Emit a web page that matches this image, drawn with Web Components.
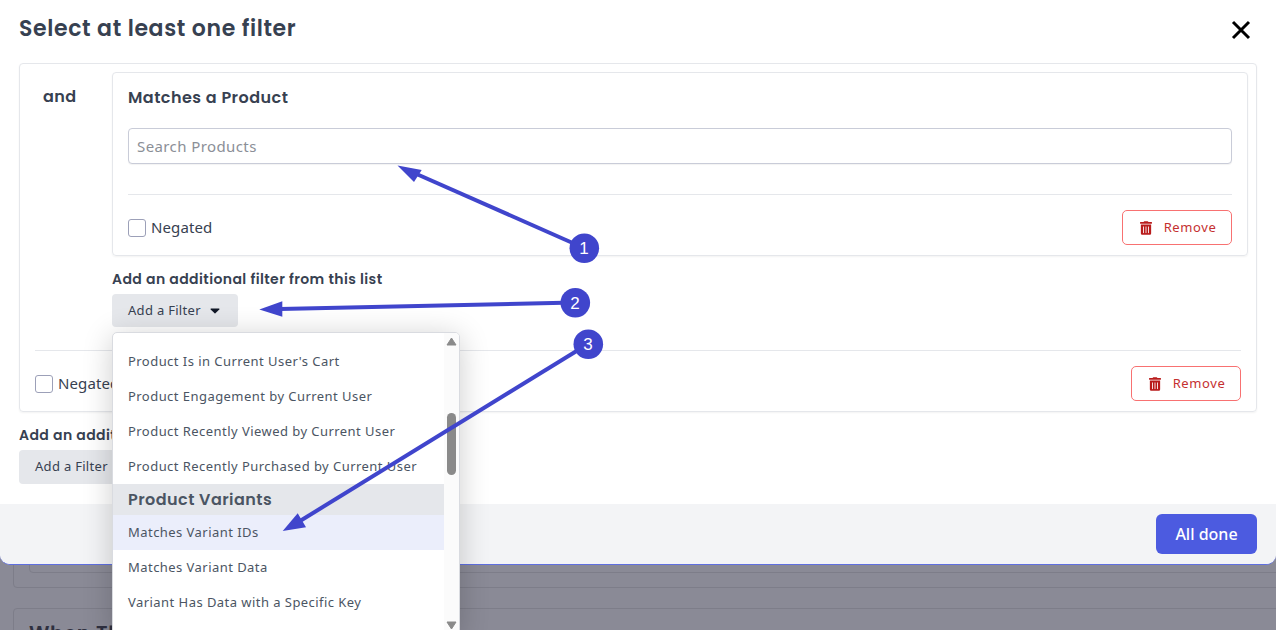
<!DOCTYPE html>
<html lang="en"><head><meta charset="utf-8"><title>Select at least one filter</title>
<style>
html,body{margin:0;height:630px;overflow:hidden;background:#8a8a96;font-family:"Noto Sans","Open Sans",sans-serif;color:#374151}
</style></head><body>
<app-page>
  <backdrop-page slot="backdrop"></backdrop-page>
  <filter-modal heading="Select at least one filter">
    <filter-group>
      <filter-card heading="Matches a Product">
        <search-field placeholder="Search Products"></search-field>
      </filter-card>
      <add-filter label="Add an additional filter from this list" open></add-filter>
    </filter-group>
    <add-filter label="Add an additional filter from this list" slot="after" tall></add-filter>
  </filter-modal>
  <annotation-layer></annotation-layer>
</app-page>
<script>
const HEAD='"Poppins","Inter","Noto Sans",sans-serif';
const TRASH='<svg viewBox="0 0 448 512" width="12" height="14" fill="#b91c1c" aria-hidden="true"><path d="M32 464a48 48 0 0 0 48 48h288a48 48 0 0 0 48-48V128H32zm272-256a16 16 0 0 1 32 0v224a16 16 0 0 1-32 0zm-96 0a16 16 0 0 1 32 0v224a16 16 0 0 1-32 0zm-96 0a16 16 0 0 1 32 0v224a16 16 0 0 1-32 0zM432 32H312l-9.4-18.7A24 24 0 0 0 281.1 0H166.8a23.72 23.72 0 0 0-21.4 13.3L136 32H16A16 16 0 0 0 0 48v32a16 16 0 0 0 16 16h416a16 16 0 0 0 16-16V48a16 16 0 0 0-16-16z"/></svg>';
function def(name,html,init){
  customElements.define(name,class extends HTMLElement{
    constructor(){super();this.attachShadow({mode:'open'});}
    connectedCallback(){
      this.shadowRoot.innerHTML=typeof html==='function'?html(this):html;
      if(init)init(this);
    }
  });
}
def('app-page',`<style>:host{display:block;position:relative;width:1276px;height:630px;overflow:hidden}</style>
<slot name="backdrop"></slot><slot></slot>`);

def('backdrop-page',`<style>
:host{display:block;position:absolute;inset:0}
.a{position:absolute;left:13px;right:-20px;top:500px;height:86px;border:1px solid #7d7d89;border-radius:4px}
.b{position:absolute;left:29px;right:-20px;top:500px;height:71px;border:1px solid #7d7d89;border-radius:4px}
.c{position:absolute;left:13px;right:-20px;top:608px;height:60px;border:1px solid #7d7d89;border-radius:4px 4px 0 0;padding:10px 15px;font:600 20px/28px ${HEAD};color:#2f3040;letter-spacing:.6px}
</style><div class="a"></div><div class="b"></div><div class="c">When This</div>`);

def('filter-modal',h=>`<style>
:host{display:flex;flex-direction:column;position:absolute;left:0;top:0;width:1276px;height:565px;box-sizing:border-box;background:#fff;border-radius:0 0 10px 10px;border-bottom:1px solid #5f6fe0}
header{display:flex;justify-content:space-between;align-items:center;height:63px;flex:none;box-sizing:border-box;padding:0 24px 5px 19px}
h2{margin:0;font:600 22px/30px ${HEAD};color:#374151;letter-spacing:.63px}
button{all:unset;display:block;width:22px;height:22px;margin-top:2px}
main{flex:1;padding:0 19px;min-height:0}
footer{flex:none;height:60px;box-sizing:border-box;background:#f3f4f6;border-radius:0 0 10px 10px;display:flex;justify-content:flex-end;align-items:center;padding:0 19px}
.done{all:unset;width:101px;height:40px;background:#4c5be0;color:#fff;border-radius:6px;font:500 16px/38px "Noto Sans",sans-serif;text-align:center}
.after{display:block;margin-top:13px}
</style>
<header><h2>${h.getAttribute('heading')}</h2>
<button aria-label="Close"><svg viewBox="0 0 22 22" width="22" height="22"><path d="M3 3 19 19M19 3 3 19" stroke="#000" stroke-width="3" fill="none"/></svg></button></header>
<main><slot></slot><div class="after"><slot name="after"></slot></div></main>
<footer><button class="done">All done</button></footer>`);

def('filter-group',`<style>
:host{display:block;box-sizing:border-box;height:349px;border:1px solid #e5e7eb;border-radius:4px;box-shadow:0 1px 2px rgba(0,0,0,.05)}
.top{display:flex;height:277px;box-sizing:border-box;padding:8px 8px 0 0}
.and{flex:none;width:92px;box-sizing:border-box;padding:15px 0 0 23px;font:600 16px/20px ${HEAD};color:#374151;letter-spacing:.4px}
.col{flex:1;min-width:0}
.col ::slotted(add-filter){margin-top:13px}
hr{border:0;border-top:1px solid #e5e7eb;margin:9px 15px 0}
</style>
<div class="top"><div class="and">and</div><div class="col"><slot></slot></div></div>
<hr>
<row-actions style="padding:15px 15px 0"></row-actions>`);

def('filter-card',h=>`<style>
:host{display:block;box-sizing:border-box;height:184px;border:1px solid #e5e7eb;border-radius:4px;box-shadow:0 1px 2px rgba(0,0,0,.05);padding:14px 15px 0}
h3{margin:0 0 19px;font:600 16px/22px ${HEAD};color:#374151;letter-spacing:.47px}
hr{border:0;border-top:1px solid #e5e7eb;margin:30px 0 15px}
</style><h3>${h.getAttribute('heading')}</h3><slot></slot><hr><row-actions></row-actions>`);

def('search-field',h=>`<style>
:host{display:block}
input{display:block;box-sizing:border-box;width:100%;height:36px;border:1px solid #c9ccd8;border-radius:4px;padding:0 8px;font:15px "Noto Sans",sans-serif;color:#374151;letter-spacing:.4px;outline:0;box-shadow:0 1px 1px rgba(0,0,0,.05)}
input::placeholder{color:#8b8f97;opacity:1}
</style><input placeholder="${h.getAttribute('placeholder')}">`);

def('row-actions',`<style>
:host{display:flex;justify-content:space-between;align-items:center;height:35px}
label{display:flex;align-items:center;gap:5px;font:15px/20px "Noto Sans",sans-serif;color:#374151;letter-spacing:.1px}
label span,button span{margin-top:-2px}
i{display:block;width:16px;height:16px;border:1px solid #9ca0b8;border-radius:3px;background:#fff}
button{all:unset;box-sizing:border-box;width:110px;height:35px;border:1px solid #f87171;border-radius:5px;display:flex;align-items:center;justify-content:center;gap:12px;padding-left:2px;font:13px/20px "Noto Sans",sans-serif;letter-spacing:.6px;color:#c53030}
</style><label><i></i><span>Negated</span></label><button>${TRASH}<span>Remove</span></button>`);

def('add-filter',h=>`<style>
:host{display:block;position:relative}
p{margin:0 0 5px;font:600 14px/20px ${HEAD};color:#374151;letter-spacing:.41px;white-space:nowrap}
button{all:unset;box-sizing:border-box;height:${h.hasAttribute('tall')?34:33}px;width:126px;background:#e5e7eb;border-radius:4px;display:flex;align-items:center;gap:9px;padding-left:16px;font:13px/20px "Noto Sans",sans-serif;letter-spacing:.3px;color:#374151}
button span{margin-top:-2px}
.wrap{position:relative;width:126px}
</style><p>${h.getAttribute('label')}</p>
<div class="wrap"><button><span>Add a Filter</span> <svg width="10" height="6" viewBox="0 0 10 6"><path d="M1.2.5h7.6c.6 0 .9.7.5 1.1L5.4 5.3a.6.6 0 0 1-.8 0L.7 1.6C.3 1.2.6.5 1.2.5z" fill="#111827"/></svg></button>
${h.hasAttribute('open')?'<filter-menu></filter-menu>':''}</div>`);

def('filter-menu',`<style>
:host{display:flex;position:absolute;z-index:10;left:0;top:38px;width:348px;height:304px;box-sizing:border-box;background:#fff;border:1px solid #d9dbe0;border-radius:5px;box-shadow:0 4px 30px rgba(0,0,0,.2);overflow:hidden}
ul{list-style:none;margin:0;padding:11px 0 0;flex:1;min-width:0;font:13px/35px "Noto Sans",sans-serif;color:#4b5563;letter-spacing:.45px}
li{height:35px;padding-left:15px;white-space:nowrap}
.h{height:31px;background:#e5e7eb;font:600 16px/31px ${HEAD};color:#4b5563;letter-spacing:.45px}
.on{background:#ebeefb}
.bar{flex:none;width:15px;background:#fbfbfb;position:relative;display:flex;flex-direction:column;align-items:center}
.t{margin-top:80px;width:9px;height:62px;border-radius:5px;background:#8a8a8a}
svg{position:absolute;left:2px}
</style>
<ul><li>Product Is in Current User's Cart</li><li>Product Engagement by Current User</li><li>Product Recently Viewed by Current User</li><li>Product Recently Purchased by Current User</li><li class="h">Product Variants</li><li class="on">Matches Variant IDs</li><li>Matches Variant Data</li><li>Variant Has Data with a Specific Key</li></ul>
<div class="bar"><svg style="top:4px" width="11" height="9" viewBox="0 0 11 9"><path d="M5.5 1 10 8H1z" fill="#8a8a8a" stroke="#8a8a8a" stroke-linejoin="round"/></svg><div class="t"></div><svg style="top:288px" width="11" height="9" viewBox="0 0 11 9"><path d="M5.5 8 10 1H1z" fill="#8a8a8a" stroke="#8a8a8a" stroke-linejoin="round"/></svg></div>`);

def('annotation-layer',`<style>:host{display:block;position:absolute;inset:0;z-index:20;pointer-events:none}svg{display:block}text{font:500 17px "Liberation Sans",sans-serif;fill:#fff;text-anchor:middle}</style>
<svg width="1276" height="630" viewBox="0 0 1276 630">
<g fill="#4045cc" stroke="none">
<path d="M584 248 412 172" stroke="#4045cc" stroke-width="4"/>
<polygon points="397.5,165.5 421.7,170 414,182"/>
<path d="M575 302.5 280 309" stroke="#4045cc" stroke-width="4"/>
<polygon points="259.3,309.5 282.3,301.3 282.3,316.7"/>
<path d="M588 344 300 521" stroke="#4045cc" stroke-width="4"/>
<polygon points="282.7,531 297.7,513.3 306,527.3"/>
<circle cx="584.3" cy="248.3" r="14.8"/><circle cx="575.3" cy="302.7" r="14.8"/><circle cx="588.3" cy="344.3" r="14.8"/>
</g>
<text x="584" y="254">1</text><text x="575" y="308.5">2</text><text x="588" y="350">3</text>
</svg>`);
</script>
</body></html>
